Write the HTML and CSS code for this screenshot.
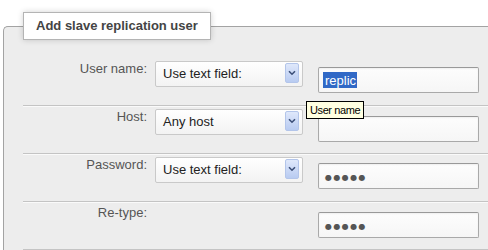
FILE: index.html
```html
<!DOCTYPE html>
<html lang="en">
<head>
  <meta charset="UTF-8" />
  <title>Add slave replication user</title>
  <link rel="stylesheet" href="styles.css">
</head>
<body>

  <fieldset class="panel">
    <legend>Add slave replication user</legend>

    <!-- User name -->
    <div class="row">
      <label class="label">User name:</label>
      <div class="select">
        <span class="select-text">Use text field:</span>
        <span class="arrow"><svg width="8" height="6" viewBox="0 0 8 6"><path d="M1 1.2 L4 4.2 L7 1.2" fill="none" stroke="#3c4f78" stroke-width="1.6"/></svg></span>
      </div>
      <div class="field"><span class="sel">replic</span></div>
    </div>

    <!-- Host -->
    <div class="row">
      <label class="label">Host:</label>
      <div class="select">
        <span class="select-text">Any host</span>
        <span class="arrow"><svg width="8" height="6" viewBox="0 0 8 6"><path d="M1 1.2 L4 4.2 L7 1.2" fill="none" stroke="#3c4f78" stroke-width="1.6"/></svg></span>
      </div>
      <div class="field low"></div>
    </div>

    <!-- Password -->
    <div class="row">
      <label class="label">Password:</label>
      <div class="select">
        <span class="select-text">Use text field:</span>
        <span class="arrow"><svg width="8" height="6" viewBox="0 0 8 6"><path d="M1 1.2 L4 4.2 L7 1.2" fill="none" stroke="#3c4f78" stroke-width="1.6"/></svg></span>
      </div>
      <div class="field"><span class="dots">●●●●●</span></div>
    </div>

    <!-- Re-type -->
    <div class="row">
      <label class="label">Re-type:</label>
      <div></div>
      <div class="field low"><span class="dots">●●●●●</span></div>
    </div>
  </fieldset>

  <div class="tooltip">User name</div>

</body>
</html>
```

FILE: styles.css
```css
* {
  box-sizing: border-box;
}

body {
  margin: 0;
  background: #fff;
  font-family: 'Liberation Sans', Arial, sans-serif;
  overflow: hidden;
  height: 250px;
}

.panel {
  margin: 12px 0 0 3px;
  width: 485px;
  height: 238px;
  padding: 18px 0 0 19px;
  border: 1px solid #a3a3a3;
  border-right: none;
  border-bottom: none;
  border-top-left-radius: 5px;
  background: #ededed;
  overflow: hidden;
}

.panel legend {
  margin-left: 0;
  padding: 0 12px;
  height: 28px;
  line-height: 26px;
  font-size: 13px;
  font-weight: bold;
  color: #444;
  background: #fff;
  border: 1px solid #b4b4b4;
  box-shadow: 0 0 6px rgba(0, 0, 0, 0.18);
}

.row {
  display: grid;
  grid-template-columns: 124px 148px 168px;
  column-gap: 8px;
  height: 48px;
  border-bottom: 1px solid #c4c4c4;
  box-shadow: 0 1px 0 #fafafa;
}

.label {
  padding-top: 3px;
  text-align: right;
  font-size: 13px;
  color: #555;
}

.select {
  position: relative;
  margin-top: 3px;
  height: 26px;
  border: 1px solid #c9c9c9;
  border-radius: 2px;
  background: linear-gradient(#fff, #f3f3f3);
}

.select-text {
  display: block;
  padding-left: 7px;
  line-height: 24px;
  font-size: 13px;
  color: #222;
}

.arrow {
  position: absolute;
  top: 1px;
  right: 3px;
  width: 14px;
  height: 20px;
  display: flex;
  justify-content: center;
  align-items: center;
  border: 1px solid #b3c5ea;
  border-radius: 2px;
  background: linear-gradient(#dfe8fb, #b8cbf1);
}

.field {
  margin: 9px 0 0 7px;
  height: 26px;
  border: 1px solid #a9a9a9;
  border-top-color: #999;
  border-radius: 2px;
  background: linear-gradient(#fdfdfd, #f6f6f6);
  box-shadow: inset 0 1px 2px rgba(0, 0, 0, 0.06);
  padding: 4px 0 0 4px;
  font-size: 13px;
}

.field.low {
  margin-top: 10px;
}

.sel {
  display: inline-block;
  padding: 1px 1px 0 2px;
  line-height: 15px;
  background: #3169c6;
  color: #fff;
}

.dots {
  display: inline-block;
  padding: 3px 0 0 2px;
  font-family: 'DejaVu Sans', sans-serif;
  font-size: 8px;
  letter-spacing: 1.4px;
  color: #555;
}

.tooltip {
  position: absolute;
  left: 306px;
  top: 101px;
  padding: 2px 3px 2px;
  font-size: 11px;
  letter-spacing: -0.4px;
  color: #000;
  background: #ffffe1;
  border: 1px solid #000;
}
```
